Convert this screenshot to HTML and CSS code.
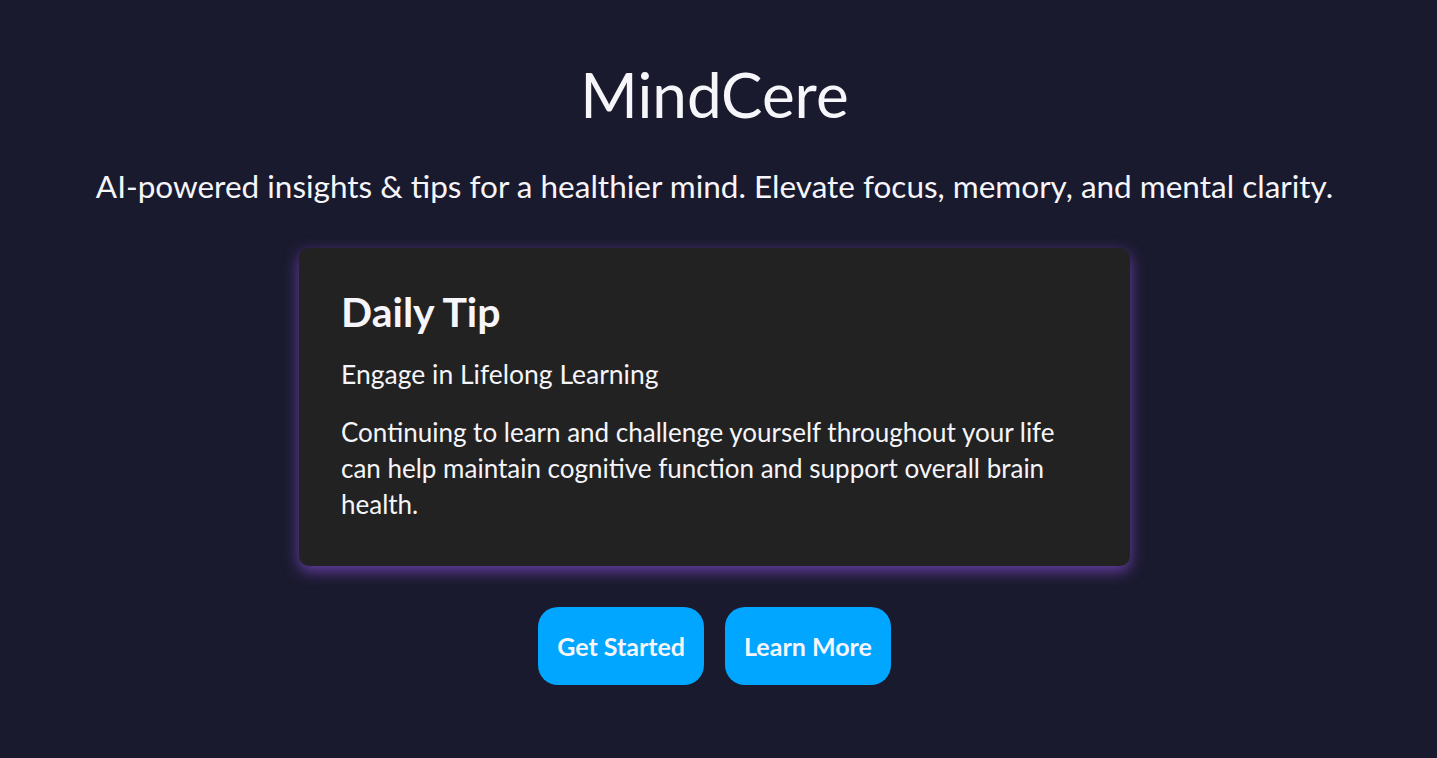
FILE: index.html
```html
<!DOCTYPE html>
<html lang="en">
<head>
<meta charset="utf-8">
<title>MindCere</title>
<link rel="stylesheet" href="styles.css">
</head>
<body>
<main class="page">
  <h1 class="title">MindCere</h1>
  <p class="subtitle">AI-powered insights &amp; tips for a healthier mind. Elevate focus, memory, and mental clarity.</p>
  <section class="card">
    <h2 class="card-title">Daily Tip</h2>
    <p class="tip-name">Engage in Lifelong Learning</p>
    <p class="tip-body">Continuing to learn and challenge yourself throughout your life can help maintain cognitive function and support overall brain health.</p>
  </section>
  <div class="actions">
    <button class="btn">Get Started</button>
    <button class="btn">Learn More</button>
  </div>
</main>
</body>
</html>
```
FILE: styles.css
```css
html, body {
  margin: 0;
  padding: 0;
  background: #1a1a2e;
  height: 100%;
}
body {
  font-family: Lato, "Noto Sans", sans-serif;
  color: #f5f5fa;
}
.page {
  display: flex;
  flex-direction: column;
  align-items: center;
  padding: 57px 8px 0 0;
}
.title {
  margin: 0;
  font-size: 62px;
  line-height: 74px;
  font-weight: 400;
}
.subtitle {
  margin: 35px 0 0;
  font-size: 31.5px;
  line-height: 40px;
}
.card {
  margin-top: 42px;
  width: 831px;
  box-sizing: border-box;
  padding: 39px 42px 44px;
  background: #222222;
  border-radius: 10px;
  box-shadow: 0 5px 15px rgba(140, 80, 220, 0.7);
}
.card-title {
  margin: 0;
  font-size: 41px;
  line-height: 50px;
  font-weight: 700;
}
.tip-name {
  margin: 21px 0 0;
  font-size: 26.5px;
  line-height: 32px;
}
.tip-body {
  margin: 24px 0 0;
  max-width: 740px;
  font-size: 26px;
  line-height: 36px;
}
.actions {
  margin-top: 41px;
  display: flex;
  gap: 21px;
}
.btn {
  font-family: inherit;
  border: none;
  background: #00a6ff;
  color: #f5f5fa;
  font-size: 25px;
  font-weight: 700;
  height: 78px;
  padding: 0 19px;
  border-radius: 20px;
}
```
